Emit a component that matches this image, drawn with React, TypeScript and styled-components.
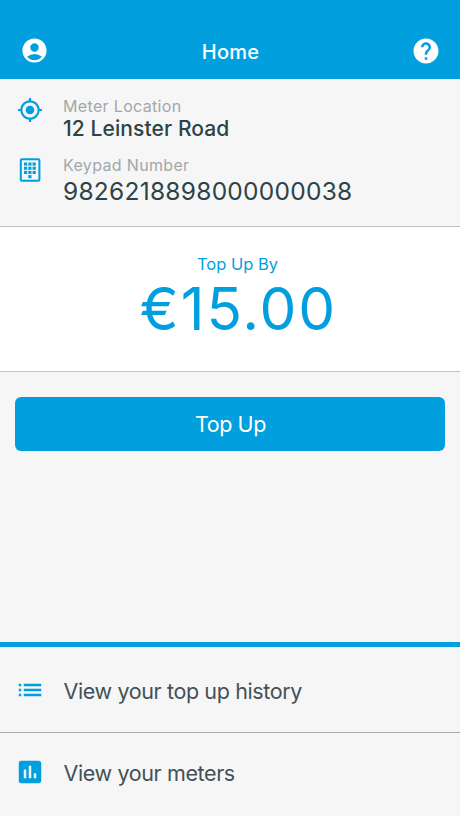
import React from 'react';
import styled, { createGlobalStyle } from 'styled-components';
import { MdAccountCircle, MdAssessment, MdHelp, MdList, MdMyLocation } from 'react-icons/md';

const BLUE = '#019fde';

const GlobalStyle = createGlobalStyle`
  * { box-sizing: border-box; }
  body { margin: 0; background: #fff; }
`;

const Screen = styled.main`
  display: flex;
  flex-direction: column;
  width: 460px;
  height: 816px;
  background: #f6f6f7;
  font-family: Inter, 'Liberation Sans', sans-serif;
  color: #2c4347;
`;

const Header = styled.header`
  display: flex;
  align-items: center;
  justify-content: space-between;
  height: 79px;
  padding: 22px 19px 0 20px;
  background: ${BLUE};
  color: #fff;
`;

const Title = styled.h1`
  margin: 3px 0 0 1px;
  font-size: 20px;
  font-weight: 500;
  line-height: 24px;
  letter-spacing: 0.2px;
`;

const IconButton = styled.button`
  display: flex;
  padding: 0;
  border: 0;
  background: none;
  color: inherit;
`;

const Details = styled.section`
  height: 148px;
  padding: 17px 0 0 16px;
  border-bottom: 1.5px solid #c0c1c2;
`;

const Detail = styled.div`
  display: grid;
  grid-template-columns: 47px 1fr;
  height: 59px;
`;

const DetailIcon = styled.div`
  display: flex;
  width: 28px;
  height: 28px;
  align-items: center;
  justify-content: center;
  color: ${BLUE};
`;

const Label = styled.div`
  font-size: 16px;
  line-height: 20px;
  letter-spacing: 0.34px;
  color: #a3a7aa;
`;

const Address = styled.div`
  margin-top: 1px;
  font-size: 21px;
  font-weight: 500;
  line-height: 24px;
  letter-spacing: 0.1px;
`;

const KeypadNumber = styled.div`
  margin-top: 2px;
  font-size: 24.5px;
  line-height: 28px;
  letter-spacing: 0.26px;
`;

const AmountPanel = styled.section`
  height: 145px;
  padding: 27px 0 0 15px;
  border-bottom: 1.5px solid #c0c1c2;
  background: #fff;
  color: ${BLUE};
  text-align: center;
`;

const AmountLabel = styled.div`
  font-size: 16.5px;
  line-height: 20px;
`;

const Amount = styled.div`
  padding-left: 2px;
  font-size: 58.5px;
  line-height: 70px;
  letter-spacing: 1.9px;
`;

const TopUpButton = styled.button`
  height: 54px;
  margin: 25px 15px 0;
  padding: 0 0 1px 1px;
  border: 0;
  border-radius: 6px;
  background: ${BLUE};
  color: #fff;
  font: 400 21.5px/26px Inter, 'Liberation Sans', sans-serif;
  letter-spacing: -0.45px;
`;

const Menu = styled.nav`
  margin-top: auto;
  border-top: 5px solid ${BLUE};
`;

const MenuRow = styled.a<{ $divided?: boolean }>`
  display: grid;
  grid-template-columns: 48.5px 1fr;
  align-items: center;
  height: ${({ $divided }) => ($divided ? '86px' : '83px')};
  padding-left: 15px;
  padding-bottom: ${({ $divided }) => ($divided ? '0' : '5px')};
  border-bottom: ${({ $divided }) => ($divided ? '1px solid #a9aaab' : '0')};
  color: #425156;
  font-size: 21.5px;
  line-height: 26px;
  letter-spacing: -0.38px;

  svg { color: ${BLUE}; }
`;

const MenuText = styled.span`
  padding-top: 2px;
`;

const KeypadIcon = () => (
  <svg width="22" height="26" viewBox="0 -2 22 26" fill="none">
    <rect x="1.8" y="1.2" width="18.6" height="21.6" rx="1" stroke={BLUE} strokeWidth="2" />
    {[4.5, 8.7, 12.9].map(y => [5, 9.3, 13.6].map(x => (
      <rect key={`${x}-${y}`} x={x} y={y} width="3.2" height="3.1" fill={BLUE} />
    )))}
    <rect x="9.3" y="17.1" width="3.2" height="3.1" fill={BLUE} />
  </svg>
);

export default function App() {
  return (
    <>
      <GlobalStyle />
      <Screen>
        <Header>
          <IconButton aria-label="Account"><MdAccountCircle size={29} /></IconButton>
          <Title>Home</Title>
          <IconButton aria-label="Help"><MdHelp size={30} /></IconButton>
        </Header>
        <Details>
          <Detail>
            <DetailIcon><MdMyLocation size={26} /></DetailIcon>
            <div>
              <Label>Meter Location</Label>
              <Address>12 Leinster Road</Address>
            </div>
          </Detail>
          <Detail>
            <DetailIcon><KeypadIcon /></DetailIcon>
            <div>
              <Label>Keypad Number</Label>
              <KeypadNumber>9826218898000000038</KeypadNumber>
            </div>
          </Detail>
        </Details>
        <AmountPanel>
          <AmountLabel>Top Up By</AmountLabel>
          <Amount>€15.00</Amount>
        </AmountPanel>
        <TopUpButton>Top Up</TopUpButton>
        <Menu>
          <MenuRow $divided>
            <MdList size={30} />
            <MenuText>View your top up history</MenuText>
          </MenuRow>
          <MenuRow>
            <MdAssessment size={30} />
            <MenuText>View your meters</MenuText>
          </MenuRow>
        </Menu>
      </Screen>
    </>
  );
}
